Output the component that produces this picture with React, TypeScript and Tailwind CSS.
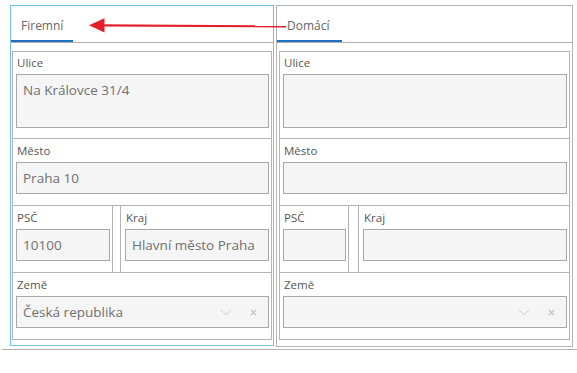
import React from "react";

// Address form – two tab panels side by side (company / home)
type Address = {
  ulice: string;
  mesto: string;
  psc: string;
  kraj: string;
  zeme: string;
};

const firemni: Address = {
  ulice: "Na Královce 31/4",
  mesto: "Praha 10",
  psc: "10100",
  kraj: "Hlavní město Praha",
  zeme: "Česká republika",
};

const domaci: Address = { ulice: "", mesto: "", psc: "", kraj: "", zeme: "" };

function Label({ text }: { text: string }) {
  return <div className="h-[16px] leading-[16px] text-[11.5px] text-[#555555] mb-[3px] pl-[1px]">{text}</div>;
}

function Box({ value, className = "" }: { value: string; className?: string }) {
  return (
    <div className={`bg-[#f5f5f5] border border-[#a8a8a8] text-[13.5px] text-[#707070] pl-[6px] ${className}`}>
      {value}
    </div>
  );
}

function Select({ value }: { value: string }) {
  return (
    <div className="h-[32px] bg-[#f5f5f5] border border-[#a8a8a8] flex items-center pl-[6px] text-[13.5px] text-[#707070]">
      <span className="flex-1">{value}</span>
      <svg width="12" height="7" viewBox="0 0 12 7" className="mr-[18px]">
        <polyline points="0.5,0.5 6,5.5 11.5,0.5" fill="none" stroke="#cdcdcd" strokeWidth="1" />
      </svg>
      <svg width="7" height="7" viewBox="0 0 7 7" className="mr-[11px]">
        <path d="M1 1L6 6M6 1L1 6" stroke="#c4c4c4" strokeWidth="1.3" />
      </svg>
    </div>
  );
}

function Panel({
  title,
  tabWidth,
  data,
  selected,
  width,
  pscWidth,
  splitGap,
}: {
  title: string;
  tabWidth: number;
  data: Address;
  selected?: boolean;
  width: number;
  pscWidth: number;
  splitGap: number;
}) {
  return (
    <div
      className={`border ${selected ? "border-[#6cc4ea] pb-[5px]" : "border-[#b3b3b3] pb-[6px]"}`}
      style={{ width }}
    >
      {/* tab header */}
      <div className="h-[37px] flex border-b border-[#b0b0b0]">
        <div
          className="h-full border-b-2 border-[#1f6fbf] pt-[6px] pl-[10px] flex items-center text-[12px] text-[#666666]"
          style={{ width: tabWidth }}
        >
          {title}
        </div>
      </div>

      {/* fields */}
      <div className={`mt-[8px] border border-[#b3b3b3] ${selected ? "mx-[1px]" : "mx-[2px]"}`}>
        <div className="border-b border-[#b3b3b3] pl-[3px] pr-[2px] pt-[3px] pb-[10px]">
          <Label text="Ulice" />
          <Box value={data.ulice} className="h-[54px] pt-[6px] leading-[18px]" />
        </div>
        <div className="border-b border-[#b3b3b3] pl-[3px] pr-[2px] pt-[4px] pb-[11px]">
          <Label text="Město" />
          <Box value={data.mesto} className="h-[32px] flex items-center" />
        </div>
        <div className="border-b border-[#b3b3b3] flex" style={{ gap: splitGap }}>
          <div className="border-r border-[#b3b3b3] pl-[3px] pr-[2px] pt-[4px] pb-[11px]" style={{ width: pscWidth }}>
            <Label text="PSČ" />
            <Box value={data.psc} className="h-[32px] flex items-center" />
          </div>
          <div className="flex-1 border-l border-[#b3b3b3] pl-[4px] pr-[2px] pt-[4px] pb-[11px]">
            <Label text="Kraj" />
            <Box value={data.kraj} className="h-[32px] flex items-center" />
          </div>
        </div>
        <div className="pl-[3px] pr-[2px] pt-[4px] pb-[11px]">
          <Label text="Země" />
          <Select value={data.zeme} />
        </div>
      </div>
    </div>
  );
}

export default function App() {
  return (
    <div className="relative w-[577px] h-[373px] bg-white font-['Open_Sans',sans-serif] overflow-hidden">
      <div className="ml-[2px] pt-[5px] pb-[2px] border-b border-[#b3b3b3]">
        <div className="flex items-start gap-[2px] pl-[8px]">
          <Panel title="Firemní" tabWidth={62} data={firemni} selected width={264} pscWidth={100} splitGap={7} />
          <Panel title="Domácí" tabWidth={65} data={domaci} width={297} pscWidth={69} splitGap={9} />
        </div>
      </div>

      {/* red annotation arrow */}
      <svg className="absolute left-0 top-0 pointer-events-none" width="577" height="373">
        <line x1="100" y1="25.4" x2="286" y2="26.4" stroke="#e3202a" strokeWidth="2.2" />
        <polygon points="89,25.3 104.5,18.3 104.5,32.5" fill="#e3202a" />
      </svg>
    </div>
  );
}
